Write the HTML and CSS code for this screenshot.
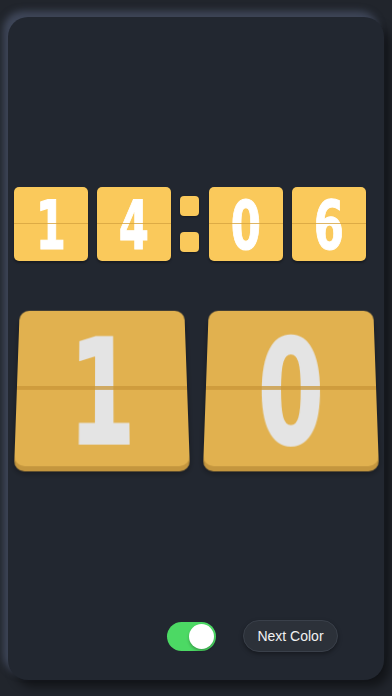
FILE: index.html
```html
<!DOCTYPE html>
<html lang="en">
<head>
    <meta charset="UTF-8">
    <meta name="viewport" content="width=device-width, initial-scale=1.0">
    <title>Flip Clock</title>
    <link rel="stylesheet" href="styles.css">
</head>
<body>
    <div class="panel">
        <div class="clock">
            <div class="flip-small"><span>1</span></div>
            <div class="flip-small"><span>4</span></div>
            <div class="colon">
                <i></i>
                <i></i>
            </div>
            <div class="flip-small"><span>0</span></div>
            <div class="flip-small"><span>6</span></div>
        </div>

        <div class="seconds">
            <div class="flip-big"><span>1</span></div>
            <div class="flip-big"><span>0</span></div>
        </div>

        <div class="controls">
            <label class="switch">
                <input type="checkbox" checked>
                <span class="knob"></span>
            </label>
            <button class="next-color">Next Color</button>
        </div>
    </div>
</body>
</html>
```

FILE: styles.css
```css
body {
    margin: 0;
    background: #21252c;
    font-family: 'Liberation Sans', Arial, sans-serif;
    height: 696px;
    overflow: hidden;
}

.panel {
    margin: 17px 8px 0 8px;
    height: 663px;
    box-sizing: border-box;
    background: #222730;
    border-radius: 20px;
    box-shadow: -5px -6px 7px rgba(88, 98, 125, 0.55), 6px 7px 10px rgba(0, 0, 0, 0.45);
    display: flex;
    flex-direction: column;
    padding-top: 170px;
}

/* top row: hours and minutes */
.clock {
    display: flex;
    align-items: center;
    gap: 9px;
    padding-left: 6px;
}

.flip-small {
    width: 74px;
    height: 74px;
    background: #fac95b;
    border-radius: 5px;
    box-shadow: 0 2px 2px rgba(0, 0, 0, 0.3);
    position: relative;
    display: flex;
    justify-content: center;
    align-items: center;
}

.flip-small::after {
    content: '';
    position: absolute;
    left: 0;
    right: 0;
    top: 36px;
    height: 1px;
    background: rgba(214, 164, 64, 0.8);
}

.flip-small span {
    display: inline-block;
    font-family: 'DejaVu Sans Condensed', 'DejaVu Sans', sans-serif;
    font-weight: bold;
    font-size: 67px;
    line-height: 1;
    color: #fff;
    -webkit-text-stroke: 1px #fff;
    transform: scaleX(0.72);
    margin-top: 4px;
}

.colon {
    width: 20px;
    display: flex;
    flex-direction: column;
    gap: 16px;
}

.colon i {
    display: block;
    width: 19px;
    height: 20px;
    background: #fac95b;
    border-radius: 4px;
    box-shadow: 0 1px 2px rgba(0, 0, 0, 0.3);
}

/* bottom row: seconds */
.seconds {
    display: flex;
    justify-content: center;
    gap: 19px;
    margin-top: 45px;
}

.flip-big {
    width: 170px;
    height: 160px;
    background: #e1b14f;
    border-radius: 10px;
    box-shadow: 0 5px 0 #c4963e, 0 7px 6px rgba(0, 0, 0, 0.35);
    transform: perspective(600px) rotateX(14deg);
    position: relative;
    display: flex;
    justify-content: center;
    align-items: center;
}

.flip-big::after {
    content: '';
    position: absolute;
    left: 0;
    right: 0;
    top: 80px;
    height: 4px;
    background: rgba(200, 150, 55, 0.75);
}

.flip-big span {
    display: inline-block;
    font-family: 'DejaVu Sans Condensed', 'DejaVu Sans', sans-serif;
    font-weight: bold;
    font-size: 150px;
    line-height: 1;
    color: #e4e4e4;
    -webkit-text-stroke: 2px #e4e4e4;
    transform: scaleX(0.7);
    margin-top: 12px;
}

/* toggle + button */
.controls {
    margin-top: auto;
    margin-bottom: 28px;
    display: flex;
    align-items: center;
    justify-content: flex-end;
    gap: 27px;
    padding-right: 46px;
}

.switch {
    position: relative;
    width: 49px;
    height: 29px;
    display: block;
}

.switch input {
    display: none;
}

.switch .knob {
    position: absolute;
    inset: 0;
    background: #4cd964;
    border-radius: 15px;
}

.switch .knob::before {
    content: '';
    position: absolute;
    width: 25px;
    height: 25px;
    top: 2px;
    right: 2px;
    background: #fff;
    border-radius: 50%;
    box-shadow: 0 2px 3px rgba(0, 0, 0, 0.25);
}

.next-color {
    width: 95px;
    height: 32px;
    border-radius: 16px;
    background: #2c3139;
    border: 1px solid #3a404a;
    color: #f2f2f2;
    font-family: 'Liberation Sans', Arial, sans-serif;
    font-size: 14px;
    box-shadow: 0 2px 4px rgba(0, 0, 0, 0.35);
    padding: 0;
}
```
